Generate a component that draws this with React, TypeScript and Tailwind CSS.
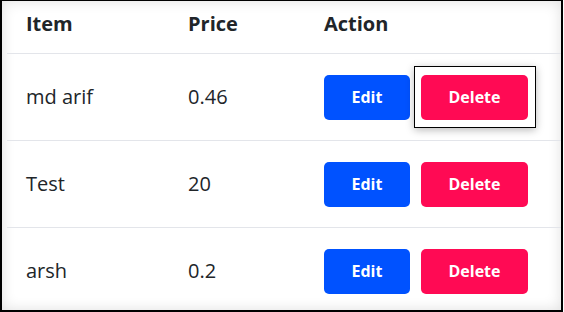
type Item = {
  name: string;
  price: string;
  focused?: boolean;
};

const items: Item[] = [
  { name: "md arif", price: "0.46", focused: true },
  { name: "Test", price: "20" },
  { name: "arsh", price: "0.2" },
];

function ActionButtons({ focused }: { focused?: boolean }) {
  return (
    <div className="flex items-center gap-[11px]">
      <button className="h-[45px] w-[86px] rounded-[5px] bg-[#0052ff] text-[16px] font-bold text-white">
        Edit
      </button>
      <div className="relative">
        {focused && (
          <span className="pointer-events-none absolute -top-[9px] -bottom-[8px] -left-[7px] -right-[8px] border border-black shadow-[0_2px_8px_rgba(0,0,0,0.28)]" />
        )}
        <button className="relative h-[45px] w-[107px] rounded-[5px] bg-[#ff0a54] text-[16px] font-bold text-white">
          Delete
        </button>
      </div>
    </div>
  );
}

export default function App() {
  return (
    <div className="h-[312px] w-[564px] bg-white font-['Open_Sans',sans-serif] text-[#212529]">
      <div className="h-[312px] w-[563px] overflow-hidden border-t border-r-2 border-b-2 border-l-2 border-black shadow-[inset_0_0_14px_rgba(0,0,0,0.13)]">
        <div className="ml-[5px]">
          <div className="grid h-[53px] grid-cols-[162px_136px_1fr] border-b border-[#e3e5ea] pt-[9px] pl-[19px] text-[20px] leading-[28px] font-bold">
            <div>Item</div>
            <div>Price</div>
            <div>Action</div>
          </div>
          {items.map((item) => (
            <div
              key={item.name}
              className="grid h-[87px] grid-cols-[162px_136px_1fr] items-center border-b border-[#e3e5ea] pl-[19px] text-[20px] leading-[28px]"
            >
              <div>{item.name}</div>
              <div>{item.price}</div>
              <ActionButtons focused={item.focused} />
            </div>
          ))}
        </div>
      </div>
    </div>
  );
}
